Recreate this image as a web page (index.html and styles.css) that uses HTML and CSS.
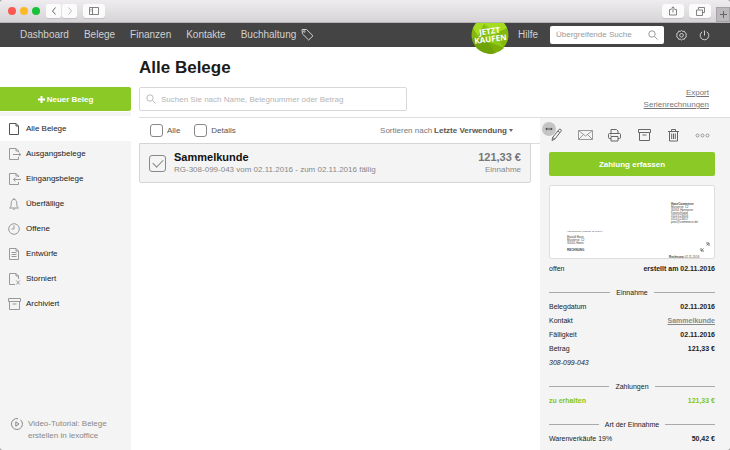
FILE: index.html
```html
<!DOCTYPE html>
<html lang="de">
<head>
  <meta charset="UTF-8" />
  <meta name="viewport" content="width=device-width, initial-scale=1.0"/>
  <title>Alle Belege</title>
  <link rel="stylesheet" href="styles.css">
</head>
<body>
<div class="window">

  <!-- browser bar -->
  <header class="titlebar">
    <span class="dot red"></span>
    <span class="dot yellow"></span>
    <span class="dot green"></span>
    <div class="history">
      <button type="button" aria-label="Zurück"><svg width="6" height="8" viewBox="0 0 6 8"><path d="M4.5 .5 1.5 4l3 3.500"/></svg></button>
      <button type="button" class="off" aria-label="Vor"><svg width="6" height="8" viewBox="0 0 6 8"><path d="M1.500 .5l3 3.500-3 3.500"/></svg></button>
    </div>
    <button type="button" class="tool" aria-label="Seitenleiste"><svg width="10" height="8" viewBox="0 0 10 8"><path d="M.5.5h9v7h-9zM3.500.5v7M1.500 2.500h1M1.500 4h1"/></svg></button>
    <button type="button" class="tool share" aria-label="Teilen"><svg width="8" height="10" viewBox="0 0 8 10"><path d="M2.500 3.500h-2v5.500h7V3.500h-2M4 6.500V1M2.300 2.600 4 .8l1.700 1.800"/></svg></button>
    <button type="button" class="tool" aria-label="Tabs"><svg width="9" height="9" viewBox="0 0 9 9"><path d="M2.500 2.500v-2h6v5h-2M.5 3h6v5.500h-6z"/></svg></button>
    <button type="button" class="newtab" aria-label="Neuer Tab"><svg width="7" height="7" viewBox="0 0 7 7"><path d="M3.500 0v7M0 3.500h7"/></svg></button>
  </header>

  <nav class="navbar">
    <a href="#">Dashboard</a>
    <a href="#">Belege</a>
    <a href="#">Finanzen</a>
    <a href="#">Kontakte</a>
    <a href="#" class="tagged">Buchhaltung
      <svg width="13" height="13" viewBox="0 0 13 13"><path d="M1 1.500 1.400 5.800 7.700 12 12 7.800 5.600 1.500z"/><circle cx="3.200" cy="3.500" r=".8"/></svg>
    </a>
    <a href="#" class="badge" aria-label="Jetzt kaufen"><svg width="38" height="38" viewBox="0 0 38 38"><circle cx="19" cy="19" r="18.500" fill="#83b80e"/><path d="M2 12A18.500 18.500 0 0 1 36 12L25 17 13 8 7 20z" fill="#a6dc20"/><path d="M13 8l12 9 8 15-16-6z" fill="#8cc814"/><path d="M1 22l16 4 8 11A18.500 18.500 0 0 1 1 22z" fill="#6fa206"/><path d="M17 26l16 6a18.500 18.500 0 0 1-9 5z" fill="#7cae0a"/></svg><span>JETZT<br>KAUFEN</span></a>
    <a href="#">Hilfe</a>
    <form class="navsearch">
      <input type="search" aria-label="Übergreifende Suche" placeholder="Übergreifende Suche">
      <svg width="10" height="10" viewBox="0 0 10 10"><circle cx="4" cy="4" r="3.200"/><path d="M6.400 6.400 9.500 9.500"/></svg>
    </form>
    <button type="button" aria-label="Einstellungen"><svg width="11" height="11" viewBox="0 0 11 11"><path d="M4.300 1.400 5.500.5l1.200.9 1.600-.2.600 1.500 1.400.9-.3 1.600.3 1.700-1.400.9-.6 1.500-1.600-.2-1.200.9-1.200-.9-1.600.2-.6-1.500-1.400-.9.300-1.700-.3-1.600 1.400-.9.600-1.500z"/><circle cx="5.500" cy="5.300" r="1.800"/></svg></button>
    <button type="button" aria-label="Abmelden"><svg width="11" height="11" viewBox="0 0 11 11"><path d="M3.300 1.800a4.300 4.300 0 1 0 4.400 0M5.500.5v5"/></svg></button>
  </nav>

  <div class="page">
    <aside class="sidebar">
      <button type="button" class="btn new"><svg width="7" height="7" viewBox="0 0 7 7"><path d="M3.500 0v7M0 3.500h7"/></svg>Neuer Beleg</button>
      <div class="menu">
        <a href="#" class="active"><svg width="13" height="14" viewBox="0 0 13 14"><path d="M1.500 1.500h6.500l2.500 2.500v8.500h-9zM8 1.500v2.500h2.500"/></svg>Alle Belege</a>
        <a href="#"><svg width="13" height="14" viewBox="0 0 13 14"><path d="M10.500 5V4L8 1.500H1.500v11h9V10M8 1.500V4h2.500M5 7.500h8M10.800 5.600l2 1.900-2 1.900"/></svg>Ausgangsbelege</a>
        <a href="#"><svg width="13" height="14" viewBox="0 0 13 14"><path d="M10.500 5V4L8 1.500H1.500v11h9V10M8 1.500V4h2.500M13 7.500H5.500M7.500 5.600l-2 1.900 2 1.900"/></svg>Eingangsbelege</a>
        <a href="#"><svg width="13" height="14" viewBox="0 0 13 14"><path d="M1.500 11c1.500-1 1.700-2 1.700-5 0-2 1.200-3.700 2.800-3.700S8.800 4 8.800 6c0 3 .2 4 1.700 5zM6 2.300V1M5 11.500c0 1.300 2 1.300 2 0"/></svg>Überfällige</a>
        <a href="#"><svg width="13" height="14" viewBox="0 0 13 14"><circle cx="6" cy="7" r="5.300"/><path d="M6 3.500V7H3.500"/></svg>Offene</a>
        <a href="#"><svg width="13" height="14" viewBox="0 0 13 14"><path d="M1.500 1.500H8L10.500 4v8.500h-9zM8 1.500V4h2.500M3.500 5.500h5M3.500 7.500h5M3.500 9.500h5"/></svg>Entwürfe</a>
        <a href="#"><svg width="13" height="14" viewBox="0 0 13 14"><path d="M10.500 7V4L8 1.500H1.500v11H7M8 1.500V4h2.500M8.300 8.500l3.500 4M11.800 8.500l-3.500 4"/></svg>Storniert</a>
        <a href="#"><svg width="13" height="14" viewBox="0 0 13 14"><path d="M.5 1.500h12v3H.5zM1.500 4.500h10v8h-10zM4.500 7h4"/></svg>Archiviert</a>
      </div>
      <a href="#" class="video"><svg width="12" height="12" viewBox="0 0 12 12"><path d="M7 .6A5.500 5.500 0 1 0 9.500 1.800M4.800 3.800 8 6 4.800 8.200z"/></svg><span>Video-Tutorial: Belege<br>erstellen in lexoffice</span></a>
    </aside>

    <main class="main">
      <h1>Alle Belege</h1>
      <div class="searchrow">
        <form class="search">
          <svg width="10" height="10" viewBox="0 0 10 10"><circle cx="4" cy="4" r="3.200"/><path d="M6.400 6.400 9.500 9.500"/></svg>
          <input type="search" aria-label="Belege suchen" placeholder="Suchen Sie nach Name, Belegnummer oder Betrag">
        </form>
        <div class="links"><a href="#">Export</a><a href="#">Serienrechnungen</a></div>
      </div>

      <div class="split">
        <section class="list">
          <div class="filter">
            <label><input type="checkbox">Alle</label>
            <label><input type="checkbox">Details</label>
            <button type="button" class="sort">Sortieren nach <b>Letzte Verwendung</b><i></i></button>
          </div>
          <article class="card">
            <input type="checkbox" class="big" aria-label="Sammelkunde auswählen" checked>
            <div class="who">
              <h2>Sammelkunde</h2>
              <p>RG-308-099-043 vom 02.11.2016 - zum 02.11.2016 fällig</p>
            </div>
            <div class="sum">
              <strong>121,33 €</strong>
              <p>Einnahme</p>
            </div>
          </article>
        </section>

        <section class="detail">
          <button type="button" class="resize" aria-label="Breite ändern"><svg width="8" height="4" viewBox="0 0 8 4"><path d="M1 2h6M2 .8.800 2 2 3.200M6 .8 7.200 2 6 3.200"/></svg></button>
          <div class="actions">
            <button type="button" aria-label="Bearbeiten"><svg width="15" height="14" viewBox="0 0 15 14"><path d="M3 12.500l.6-3 6.400-8c1-1.200 3 .3 2.100 1.600l-6.300 8zM3.600 9.500l2.200 1.600M8.800 3l2.100 1.600"/></svg></button>
            <button type="button" class="light" aria-label="E-Mail"><svg width="15" height="14" viewBox="0 0 15 14"><path d="M.5 2.500h14v9H.5zM.5 2.500l7 5.500 7-5.500M.5 11.500l5-5M14.500 11.500l-5-5"/></svg></button>
            <button type="button" aria-label="Drucken"><svg width="15" height="14" viewBox="0 0 15 14"><path d="M4 5.500V1.500h5.500L11 3v2.500M4 10.500H2.500a1 1 0 0 1-1-1v-3a1 1 0 0 1 1-1h10a1 1 0 0 1 1 1v3a1 1 0 0 1-1 1H11M4 8.500h7v4.500H4zM3.300 7h1"/></svg></button>
            <button type="button" aria-label="Archivieren"><svg width="15" height="14" viewBox="0 0 15 14"><path d="M1.500 1.500h12v3h-12zM2.500 4.500h10v8h-10zM5.500 7h4"/></svg></button>
            <button type="button" aria-label="Löschen"><svg width="15" height="14" viewBox="0 0 15 14"><path d="M2 3.500h11M5.500 3.500v-2h4v2M3.500 3.500v9.500h8V3.500M5.700 5.500v5.500M7.500 5.500v5.500M9.300 5.500v5.500"/></svg></button>
            <button type="button" class="light" aria-label="Mehr"><svg width="15" height="14" viewBox="0 0 15 14"><circle cx="2.500" cy="7.500" r="1.500"/><circle cx="7.500" cy="7.500" r="1.500"/><circle cx="12.500" cy="7.500" r="1.500"/></svg></button>
          </div>
          <button type="button" class="btn">Zahlung erfassen</button>

          <div class="preview">
            <address class="sender"><b>HaseCommerce</b><br>Musterstr. 12<br>30161 Hannover<br>Deutschland<br>0111/123456<br>0111/123457<br>post@commerce.de</address>
            <div class="receiver">
              <p>HaseCommerce, Musterstr. 12, 30161 H</p>
              <p>Harald Hase<br>Musterstr. 12<br>30161 Hann.</p>
              <p><b>RECHNUNG</b></p>
            </div>
            <p class="cut"><b>Rechnung</b> 02.11.2016</p>
            <svg class="expand" width="10" height="10" viewBox="0 0 10 10"><path d="M6 1h3v3M9 1 6.500 3.500M1 6v3h3M1 9l2.500-2.500"/></svg>
          </div>
          <div class="row"><span>offen</span><b>erstellt am 02.11.2016</b></div>

          <h3>Einnahme</h3>
          <div class="row"><span>Belegdatum</span><b>02.11.2016</b></div>
          <div class="row"><span>Kontakt</span><a href="#">Sammelkunde</a></div>
          <div class="row"><span>Fälligkeit</span><b>02.11.2016</b></div>
          <div class="row"><span>Betrag</span><b>121,33 €</b></div>
          <div class="row"><em>308-099-043</em></div>

          <h3>Zahlungen</h3>
          <div class="row due"><b>zu erhalten</b><b>121,33 €</b></div>

          <h3>Art der Einnahme</h3>
          <div class="row"><span>Warenverkäufe 19%</span><b>50,42 €</b></div>
        </section>
      </div>
    </main>
  </div>
</div>
</body>
</html>
```
FILE: styles.css
```css
* { box-sizing: border-box; }
body {
  margin: 0; background: #aaa; color: #222;
  font-family: "Liberation Sans", Arial, sans-serif; font-size: 8px;
}
h1, h2, h3, p { margin: 0; }
a { color: inherit; text-decoration: none; }
button, input { font: inherit; color: inherit; }
button { border: 0; padding: 0; background: none; cursor: pointer; }
svg { display: block; flex: none; fill: none; stroke: currentColor; stroke-width: 1; }
input[type="search"] { appearance: none; border: 0; padding: 0; background: none; outline: 0; min-width: 0; flex: 1; }

.window {
  display: flex; flex-direction: column; min-height: 100vh;
  background: #fff; border-radius: 4px; overflow: hidden;
}

/* browser bar */
.titlebar {
  display: flex; align-items: center; height: 23px; padding-left: 8px;
  position: relative; z-index: 2; color: #666;
  background: linear-gradient(#eeecee, #d6d4d6); border-bottom: 1px solid #b5b3b5;
}
.dot { width: 8px; height: 8px; border-radius: 50%; margin-right: 4px; }
.red { background: #f95951; }
.yellow { background: #fbb829; }
.green { background: #17c236; }
.history { display: flex; gap: 1px; margin: 0 6px 0 2px; }
.titlebar button { display: flex; align-items: center; justify-content: center; }
.history button { width: 15px; height: 14px; background: #fbfbfb; border-radius: 2px; box-shadow: 0 1px 0 #c4c2c4; }
.history .off { color: #bbb; }
.tool { width: 22px; height: 14px; background: #fbfbfb; border-radius: 3px; box-shadow: 0 1px 0 #c4c2c4; }
.tool svg { stroke-width: .8; }
.share { margin-left: auto; margin-right: 5px; }
.newtab { width: 14px; height: 15px; margin-left: 5px; align-self: flex-end; background: #bbb9bb; border: 1px solid #a5a3a5; }

/* main navigation */
.navbar {
  display: flex; align-items: center; gap: 15px; height: 24px; padding: 0 20px;
  background: #444; color: #d0d0d0; font-size: 10px; line-height: 12px;
}
.navbar > a:not(.badge) { padding-bottom: 1px; }
.tagged { display: flex; align-items: center; gap: 5px; }
.badge { position: relative; width: 38px; height: 38px; margin: 0 -6px 0 auto; color: #fff; }
.badge span {
  position: absolute; inset: 0; display: flex; align-items: center; justify-content: center;
  font: bold 8px/8px "Open Sans", sans-serif; text-align: center; transform: rotate(-7deg);
}
.badge svg { stroke: none; }
.navsearch {
  display: flex; align-items: center; width: 114px; height: 18px; padding: 0 6px;
  margin: 0 -3px; background: #fff; border-radius: 2px; color: #999; font-size: 8px;
}
.navsearch input::placeholder { color: #999; }
.navbar button { margin-right: -3px; }
.navbar button:last-child { margin-right: 0; }

.page { display: flex; flex: 1; }
.btn {
  display: flex; align-items: center; justify-content: center; gap: 2px; width: 100%; height: 24px;
  background: #8ac926; color: #fff; font-weight: bold; border-radius: 2px;
}

/* left menu */
.sidebar {
  display: flex; flex-direction: column; width: 131px; padding-top: 40px;
  background: linear-gradient(#fff 65px, #f4f4f4 65px);
}
.new { border-radius: 0 2px 2px 0; }
.new svg { stroke-width: 2; }
.menu { padding-top: 5px; }
.menu a { display: flex; align-items: center; gap: 5px; height: 25px; padding-left: 8px; }
.menu svg { color: #999; }
.menu .active { background: #fff; }
.menu .active svg { color: #555; }
.video { display: flex; align-items: flex-start; gap: 5px; margin-top: auto; padding: 0 0 8px 11px; color: #888; line-height: 12px; }

/* content */
.main { display: flex; flex-direction: column; flex: 1; min-width: 0; padding-left: 8px; }
h1 { padding-top: 11px; font-size: 17px; line-height: 20px; color: #1b1b1b; }
.searchrow { display: flex; justify-content: space-between; align-items: flex-start; padding: 9px 21px 6px 0; }
.search {
  display: flex; align-items: center; gap: 5px; width: 268px; height: 24px; padding: 0 6px;
  border: 1px solid #d8d8d8; border-radius: 2px; color: #bbb;
}
.search input::placeholder { color: #b5b5b5; }
.links { display: flex; flex-direction: column; align-items: flex-end; line-height: 12px; color: #777; }
.links a { text-decoration: underline; }

.split { display: flex; flex: 1; border-top: 1px solid #ddd; }
.list { flex: 1; min-width: 0; }
.filter {
  display: flex; align-items: center; gap: 14px; height: 26px; padding: 0 27px 0 11px;
  margin-bottom: -1px; border-bottom: 1px solid #ddd; color: #555;
}
.filter label { display: flex; align-items: center; gap: 4px; }
input[type="checkbox"] {
  appearance: none; width: 13px; height: 13px; margin: 0;
  border: 1px solid #888; border-radius: 3px; background: #fff;
}
.sort { display: flex; align-items: center; gap: 2px; margin-left: auto; color: #777; }
.sort b { color: #555; }
.sort i { border: 2px solid transparent; border-top: 3px solid #666; border-bottom: 0; }
.card {
  display: flex; align-items: center; height: 40px; margin-right: 9px; padding: 0 9px;
  background: #f4f4f4; border: 1px solid #d5d5d5; border-radius: 2px; color: #888;
}
input.big { width: 17px; height: 17px; margin-right: 8px; background: none; display: flex; align-items: center; justify-content: center; }
.big::before { content: ""; width: 9px; height: 5px; border: solid #888; border-width: 0 0 1px 1px; transform: translateY(-1px) rotate(-45deg); }
.who { flex: 1; }
.card h2, .card strong { font-size: 11px; line-height: 14px; }
.card h2 { color: #111; }
.card strong { color: #777; }
.card p { line-height: 12px; }
.sum { text-align: right; }

/* document details */
.detail { position: relative; width: 190px; padding: 10px 15px 4px 9px; background: #f4f4f4; font-size: 7px; }
.detail .btn { font-size: 8px; }
.resize {
  position: absolute; left: 2px; top: 4px; width: 14px; height: 14px;
  display: flex; align-items: center; justify-content: center; background: #c4c4c4; border-radius: 50%; color: #444;
}
.actions { display: flex; justify-content: space-between; margin-bottom: 10px; padding-right: 5px; color: #666; }
.actions .light { color: #999; }
.preview {
  position: relative; height: 74px; margin: 9px 0 3px; overflow: hidden;
  background: #fff; border: 1px solid #ddd; border-radius: 2px; color: #444; font-size: 3px; line-height: 3px;
}
.sender { position: absolute; left: 121px; top: 17px; font-style: normal; }
.receiver { position: absolute; left: 17px; top: 44px; }
.receiver p { margin-bottom: 4px; white-space: nowrap; }
.receiver p:first-child { font-size: 2px; margin-bottom: 3px; }
.cut { position: absolute; left: 119px; bottom: -1px; }
.expand { position: absolute; right: 4px; bottom: 6px; color: #777; }
.row { display: flex; justify-content: space-between; line-height: 14px; }
.row a { color: #888; font-weight: bold; text-decoration: underline; }
.due { color: #83c41a; }
h3 { display: flex; align-items: center; gap: 6px; margin-top: 9px; font-size: 7px; font-weight: normal; line-height: 15px; }
h3::before, h3::after { content: ""; flex: 1; height: 1px; background: #aaa; }
```
